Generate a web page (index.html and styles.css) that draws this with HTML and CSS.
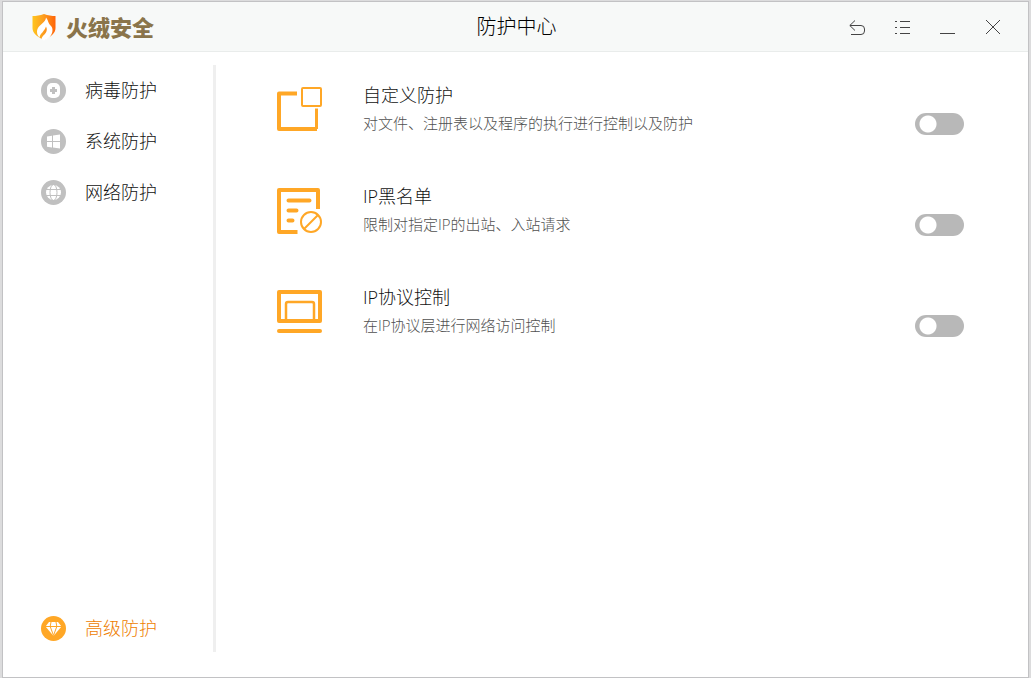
FILE: index.html
```html
<!DOCTYPE html>
<html lang="zh-CN">
<head>
<meta charset="utf-8">
<title>防护中心</title>
<link rel="stylesheet" href="styles.css">
</head>
<body>
<div class="window">
  <header class="titlebar">
    <div class="brand">
      <svg class="brand-mark" width="24" height="28" viewBox="0 0 24 28" aria-hidden="true">
        <defs><linearGradient id="flame" x1="0" x2="1" y1="0" y2="0"><stop offset="0" stop-color="#ffc51f"/><stop offset=".45" stop-color="#fda01f"/><stop offset="1" stop-color="#ff6408"/></linearGradient></defs>
        <path fill="url(#flame)" d="M12 1C8 2.600 4 3 .5 3v12c0 5 4 8.500 11.500 12 7.500-3.500 11.500-7 11.500-12V3C20 3 16 2.600 12 1z"/>
        <path fill="#fff" d="M14 4.500c0 5-8.500 7.500-9 13.500-.2 3.500 1 5 2.500 6.500.5-4 5-6 6.500-11 1 2 1 3.500.4 5C13.500 21.500 9.500 23 9.500 26.500l2.500 1c5-1.500 7.500-5 8.300-8.500 1.100-5-1.800-6-3.300-8.500-1-1.800-1-3.500-3-6z"/>
      </svg>
      <span class="brand-name">火绒安全</span>
    </div>
    <h1 class="page-title">防护中心</h1>
    <div class="window-actions">
      <button class="action" type="button" aria-label="返回"><svg width="17" height="17" viewBox="0 0 17 17"><path d="M6 1.500.8 6.500 6 11.500M1 6.500h11a3.500 3.500 0 0 1 3.500 3.500v2a3.500 3.500 0 0 1-3.500 3.500H2"/></svg></button>
      <button class="action" type="button" aria-label="菜单"><svg width="17" height="17" viewBox="0 0 17 17"><path d="M1 2.500h2M6 2.500h10M1 8.500h2M6 8.500h10M1 14.500h2M6 14.500h10"/></svg></button>
      <button class="action" type="button" aria-label="最小化"><svg width="17" height="17" viewBox="0 0 17 17"><path d="M1 14.500h15"/></svg></button>
      <button class="action" type="button" aria-label="关闭"><svg width="17" height="17" viewBox="0 0 17 17"><path d="M2 1l14 14M16 1L2 15"/></svg></button>
    </div>
  </header>
  <div class="workspace">
    <nav class="sidebar">
      <a class="nav-item" href="#virus">
        <svg width="26" height="26" viewBox="0 -1 26 26" aria-hidden="true"><circle class="disc" cx="12.500" cy="12.500" r="12.500"/><rect x="6" y="5" width="13" height="15" rx="5" fill="#fff"/><path class="disc" d="M11 9h3v2h2v3h-2v2h-3v-2H9v-3h2z"/></svg>
        病毒防护</a>
      <a class="nav-item" href="#system">
        <svg width="26" height="26" viewBox="0 -1 26 26" aria-hidden="true"><circle class="disc" cx="12.500" cy="12.500" r="12.500"/><path fill="#fff" d="M6 7.500l5-.8V12H6zM12 6.500l7-1V12h-7zM6 13h5v5.500l-5-.8zM12 13h7v6.500l-7-1z"/></svg>
        系统防护</a>
      <a class="nav-item" href="#network">
        <svg width="26" height="26" viewBox="0 -1 26 26" aria-hidden="true"><circle class="disc" cx="12.500" cy="12.500" r="12.500"/><circle cx="12.500" cy="12.500" r="7.500" fill="#fff"/><g class="globe-lines"><path d="M4 9.500h17M4 15.500h17"/><ellipse cx="12.500" cy="12.500" rx="3.500" ry="8"/></g></svg>
        网络防护</a>
      <a class="nav-item nav-item-active" href="#advanced">
        <svg width="26" height="26" viewBox="0 -1 26 26" aria-hidden="true"><circle class="disc" cx="12.500" cy="12.500" r="12.500"/><path fill="#fff" d="M8 6h9l3.500 4.500-8 9.500-8-9.500z"/><path fill="none" stroke="#ffa726" d="M4 10.500h17M10 6l-.8 4.500 3.300 9 3.300-9L15 6"/></svg>
        高级防护</a>
    </nav>
    <main class="features">
      <section class="feature">
        <svg class="feature-icon" width="48" height="48" viewBox="0 0 48 48" aria-hidden="true"><path stroke-width="4" d="M21 7.500H3V43h38"/><path stroke-width="3" d="M40.500 22.500V43"/><rect x="26" y="2" width="19" height="18" rx="1" stroke-width="2"/></svg>
        <div class="feature-text"><h2 id="custom">自定义防护</h2><p>对文件、注册表以及程序的执行进行控制以及防护</p></div>
        <input class="switch" type="checkbox" role="switch" aria-labelledby="custom">
      </section>
      <section class="feature">
        <svg class="feature-icon" width="48" height="48" viewBox="0 0 48 48" aria-hidden="true"><path stroke-width="4" d="M42 22V3H3v42h18.500"/><path stroke-width="4" stroke-linecap="round" d="M12.500 13.500h21M12.500 23.500h8M12.500 33.500h4"/><circle cx="35" cy="35" r="10" stroke-width="2"/><path stroke-width="2" d="M28 42l14-14"/></svg>
        <div class="feature-text"><h2 id="blacklist">IP黑名单</h2><p>限制对指定IP的出站、入站请求</p></div>
        <input class="switch" type="checkbox" role="switch" aria-labelledby="blacklist">
      </section>
      <section class="feature">
        <svg class="feature-icon" width="48" height="48" viewBox="0 0 48 48" aria-hidden="true"><rect x="3" y="4" width="41" height="29" stroke-width="4"/><path stroke-width="2.500" d="M10 33V16q0-2 2-2h24q2 0 2 2v17"/><path stroke-width="4" stroke-linecap="round" d="M3 43h41"/></svg>
        <div class="feature-text"><h2 id="protocol">IP协议控制</h2><p>在IP协议层进行网络访问控制</p></div>
        <input class="switch" type="checkbox" role="switch" aria-labelledby="protocol">
      </section>
    </main>
  </div>
</div>
</body>
</html>
```
FILE: styles.css
```css
* { box-sizing: border-box; }
body {
  margin: 0;
  padding: 2px 3px 1px;
  height: 100vh;
  background: #dcdcdd;
  color: #111;
  font-family: "Open Sans", "Noto Sans CJK SC", sans-serif;
  font-weight: 300;
}
.window {
  display: flex;
  flex-direction: column;
  height: 100%;
  background: #fff;
  box-shadow: 0 0 0 1px #c2c2c4;
}
.titlebar {
  display: grid;
  grid-template-columns: 1fr auto 1fr;
  align-items: center;
  height: 50px;
  padding: 1px 27px 0 29px;
  background: #f7f9f8;
  border-bottom: 1px solid #e9eceb;
}
.brand { display: flex; align-items: center; gap: 10px; }
.brand-name {
  color: #8a744a;
  font-size: 22px;
  line-height: 28px;
  font-weight: 900;
}
.page-title { margin: 0; font-size: 20px; line-height: 28px; font-weight: 300; color: #000; }
.window-actions { display: flex; justify-content: flex-end; gap: 28px; }
.action {
  display: block;
  padding: 0;
  border: 0;
  background: none;
}
.action svg { display: block; fill: none; stroke: #444; stroke-width: 1; }
.workspace { display: flex; flex: 1; padding: 13px 64px 25px 0; }
.sidebar {
  display: flex;
  flex-direction: column;
  width: 213px;
  border-right: 3px solid #efefef;
}
.nav-item {
  display: flex;
  align-items: center;
  gap: 18px;
  height: 51px;
  padding: 0 0 1px 38px;
  color: #111;
  font-size: 18px;
  line-height: 26px;
  text-decoration: none;
}
.disc { fill: #c0c0c0; }
.globe-lines { fill: none; stroke: #c0c0c0; stroke-width: 1; }
.nav-item-active { height: 48px; margin-top: auto; color: #ee7d00; }
.nav-item-active .disc { fill: #ffa726; }
.features { flex: 1; padding: 17px 0 0 60px; }
.feature { display: flex; align-items: flex-start; height: 101px; }
.feature-icon { margin-top: 4px; fill: none; stroke: #ffa726; stroke-linejoin: round; }
.feature-text { flex: 1; margin-left: 39px; }
.feature h2 { margin: 0; font-size: 18px; line-height: 26px; font-weight: 300; }
.feature p { margin: 4px 0 0; font-size: 15px; line-height: 22px; color: #505050; }
.switch {
  appearance: none;
  width: 49px;
  height: 22px;
  margin: 31px 0 0;
  border-radius: 11px;
  background: radial-gradient(circle at 13px 11px, #fff 8px, #b8b8b8 9px);
}
.switch:checked { background: radial-gradient(circle at 36px 11px, #fff 8px, #ffa726 9px); }
```
